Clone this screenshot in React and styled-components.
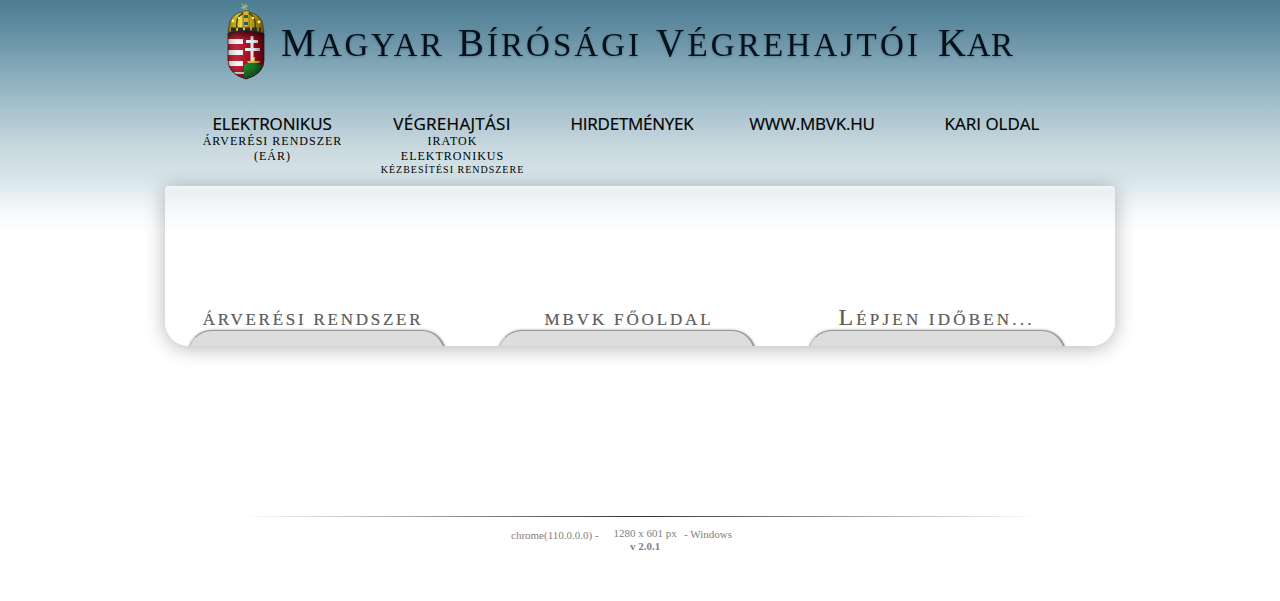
import React from "react";
import styled, { createGlobalStyle } from "styled-components";

const Global = createGlobalStyle`
  body {
    margin: 0;
    background: #fff;
    font-family: "Liberation Serif", "Times New Roman", serif;
  }
`;

const Page = styled.div`
  height: 601px;
  overflow: hidden;
  background: linear-gradient(
    #4d7d92 0,
    #5b889c 22px,
    #8badbd 75px,
    #a8c2ce 110px,
    #cbdae0 150px,
    #d8e6eb 180px,
    #f3f6f8 206px,
    #fff 232px
  );
`;

const Header = styled.header`
  display: flex;
  height: 113px;
  padding-left: 226px;
`;

const Crest = styled.svg`
  width: 40px;
  height: 84px;
`;

const Wordmark = styled.svg`
  width: 760px;
  height: 84px;
  margin-left: 6px;
  fill: #04111a;
  filter: drop-shadow(0 1px 1px rgba(10, 40, 60, 0.3));
`;

const Nav = styled.nav`
  display: flex;
  width: 900px;
  height: 73px;
  margin-left: 182px;
`;

const NavItem = styled.a`
  display: flex;
  flex-direction: column;
  align-items: center;
  width: 180px;
  color: #000;
  white-space: nowrap;
`;

const NavTitle = styled.span`
  height: 21px;
  font: 17px/21px "Open Sans", sans-serif;
  letter-spacing: ${(p) => p.$track}px;
  -webkit-text-stroke: 0.2px #000;
`;

const NavLine = styled.span`
  font-size: ${(p) => (p.$small ? 10 : 12)}px;
  line-height: ${(p) => (p.$small ? 11 : 15)}px;
  letter-spacing: 1px;
  padding-left: 1px;
`;

const Panel = styled.main`
  box-sizing: border-box;
  display: flex;
  gap: 50px;
  width: 950px;
  height: 160px;
  margin: 0 auto;
  padding: 118px 0 0 22px;
  border-radius: 4px 4px 24px 24px;
  background: linear-gradient(#f3f6f8 0, #e9eff3 4px, #f3f6f8 20px, #fff 45px);
  box-shadow: 0 2px 20px rgba(0, 0, 0, 0.3);
`;

const Section = styled.section`
  display: flex;
  flex-direction: column;
  align-items: center;
  width: 260px;
`;

const SectionTitle = styled.h2`
  margin: 0 0 0 ${(p) => p.$shift}px;
  height: 26px;
  font-size: 17px;
  font-weight: 400;
  line-height: 31px;
  letter-spacing: ${(p) => p.$track}px;
  color: #5c5c5c;
  white-space: nowrap;
  -webkit-text-stroke: 0.2px #5c5c5c;
`;

const Initial = styled.span`
  font-size: 24px;
  line-height: 0;
`;

const Tab = styled.div`
  box-sizing: border-box;
  flex: none;
  width: 258px;
  height: 24px;
  border-top: 1px solid #999;
  border-right: 2px solid #999;
  border-left: 1px solid #c4c4c4;
  border-radius: 24px 24px 0 0;
  background: #ddd;
  box-shadow: 0 0 3px rgba(0, 0, 0, 0.35);
  clip-path: inset(-5px -5px 8px -5px);
`;

const Rule = styled.hr`
  width: 800px;
  height: 1px;
  margin: 170px auto 0;
  border: 0;
  background: linear-gradient(90deg, transparent, #333 50%, transparent);
`;

const Footer = styled.footer`
  display: flex;
  padding: 10px 0 0 511px;
  color: #808080;
  font-size: 11px;
  line-height: 13px;
  white-space: nowrap;
`;

const Browser = styled.span`
  width: 102px;
  padding-top: 2px;
`;

const Center = styled.div`
  width: 64px;
  text-align: center;
`;

const System = styled.span`
  margin-left: 7px;
  padding-top: 1px;
`;

const words = [
  { first: "M", rest: "AGYAR", x: 9, width: 161 },
  { first: "B", rest: "ÍRÓSÁGI", x: 186, width: 181 },
  { first: "V", rest: "ÉGREHAJTÓI", x: 384, width: 262 },
  { first: "K", rest: "AR", x: 666, width: 75 },
];

const menu = [
  { title: "ELEKTRONIKUS", track: -0.15, lines: [{ text: "ÁRVERÉSI RENDSZER" }, { text: "(EÁR)" }] },
  {
    title: "VÉGREHAJTÁSI",
    track: 0.3,
    lines: [{ text: "IRATOK" }, { text: "ELEKTRONIKUS" }, { text: "KÉZBESÍTÉSI RENDSZERE", small: true }],
  },
  { title: "HIRDETMÉNYEK", track: -0.25, lines: [] },
  { title: "WWW.MBVK.HU", track: -0.2, lines: [] },
  { title: "KARI OLDAL", track: 0, lines: [] },
];

function CoatOfArms() {
  return (
    <Crest viewBox="0 0 40 84">
      <defs>
        <clipPath id="shield">
          <path d="M2 33Q20 29 38 33V60Q38 74 20 79Q2 74 2 60Z" />
        </clipPath>
        <linearGradient id="shade">
          <stop offset="0" stopColor="#000" stopOpacity=".3" />
          <stop offset=".3" stopColor="#fff" stopOpacity=".12" />
          <stop offset=".7" stopColor="#000" stopOpacity=".12" />
          <stop offset="1" stopColor="#000" stopOpacity=".7" />
        </linearGradient>
        <linearGradient id="dusk" x2="0" y2="1">
          <stop offset="0" stopColor="#000" stopOpacity=".8" />
          <stop offset=".22" stopColor="#000" stopOpacity="0" />
          <stop offset=".7" stopColor="#000" stopOpacity="0" />
          <stop offset="1" stopColor="#000" stopOpacity=".6" />
        </linearGradient>
        <linearGradient id="gold">
          <stop offset="0" stopColor="#8b7410" />
          <stop offset=".35" stopColor="#edda45" />
          <stop offset=".6" stopColor="#c4a51b" />
          <stop offset="1" stopColor="#67550a" />
        </linearGradient>
      </defs>
      <path d="M2 32L4 21Q8 12 19 12Q31 12 36 21L38 32Q20 29 2 32Z" fill="url(#gold)" stroke="#3d3408" strokeWidth=".7" />
      <path d="M11 28Q9 18 17 13M29 28Q31 18 23 13" fill="none" stroke="#4b4010" strokeWidth="1.5" />
      <path d="M16 4L21 10M20 4L17 10M15 8L22 6" stroke="#b9b95c" strokeWidth="1.1" />
      <path d="M17 11H23V27H17Z" fill="#d9b71c" stroke="#514408" strokeWidth=".6" />
      <path d="M18 15H22V18H18ZM18 22H22V25H18Z" fill="#255d62" />
      <path d="M5 29.500H35" stroke="#2b2921" strokeWidth="4" strokeDasharray="5 2" />
      <g fill="#fff06a">
        <circle cx="7" cy="21" r="1.4" />
        <circle cx="13" cy="18" r="1.2" />
        <circle cx="27" cy="18" r="1.2" />
        <circle cx="33" cy="22" r="1.4" />
      </g>
      <g clipPath="url(#shield)">
        <path d="M0 29H40V84H0Z" fill="#b0061e" />
        <path d="M0 39H17V44H0ZM0 50H17V55H0ZM0 61H17V66H0ZM0 72H18V74H0Z" fill="#f2f3f3" />
        <path d="M18 78V66Q20 62 28 63Q36 64 39 68V83H18Z" fill="#168027" />
        <path d="M22 63L21 61H27V57H29V61H35L33 63Z" fill="#e7c735" />
        <path d="M23.500 36H26.500V40H31V43H26.500V48H33V51H26.500V61H23.500V51H18V48H23.500V43H19V40H23.500Z" fill="#fff" transform="translate(1 0)" />
        <path d="M0 28H40V84H0Z" fill="url(#shade)" />
        <path d="M0 28H40V84H0Z" fill="url(#dusk)" />
      </g>
      <path d="M2 33Q20 29 38 33V60Q38 74 20 79Q2 74 2 60Z" fill="none" stroke="#25191d" strokeWidth=".8" />
    </Crest>
  );
}

export default function App() {
  return (
    <>
      <Global />
      <Page>
        <Header>
          <CoatOfArms />
          <Wordmark>
            {words.map((w) => (
              <text key={w.first} x={w.x} y="56" fontSize="33" textLength={w.width}>
                <tspan fontSize="39">{w.first}</tspan>{w.rest}
              </text>
            ))}
          </Wordmark>
        </Header>
        <Nav>
          {menu.map((item) => (
            <NavItem key={item.title}>
              <NavTitle $track={item.track}>{item.title}</NavTitle>
              {item.lines.map((line) => (
                <NavLine key={line.text} $small={line.small}>{line.text}</NavLine>
              ))}
            </NavItem>
          ))}
        </Nav>
        <Panel>
          <Section>
            <SectionTitle $track={2.75} $shift={-8}>ÁRVERÉSI RENDSZER</SectionTitle>
            <Tab />
          </Section>
          <Section>
            <SectionTitle $track={2.85} $shift={4}>MBVK FŐOLDAL</SectionTitle>
            <Tab />
          </Section>
          <Section>
            <SectionTitle $track={3.2} $shift={-1}><Initial>L</Initial>ÉPJEN IDŐBEN...</SectionTitle>
            <Tab />
          </Section>
        </Panel>
        <Rule />
        <Footer>
          <Browser>chrome(110.0.0.0) -</Browser>
          <Center>1280 x 601 px<br /><b>v 2.0.1</b></Center>
          <System>- Windows</System>
        </Footer>
      </Page>
    </>
  );
}
